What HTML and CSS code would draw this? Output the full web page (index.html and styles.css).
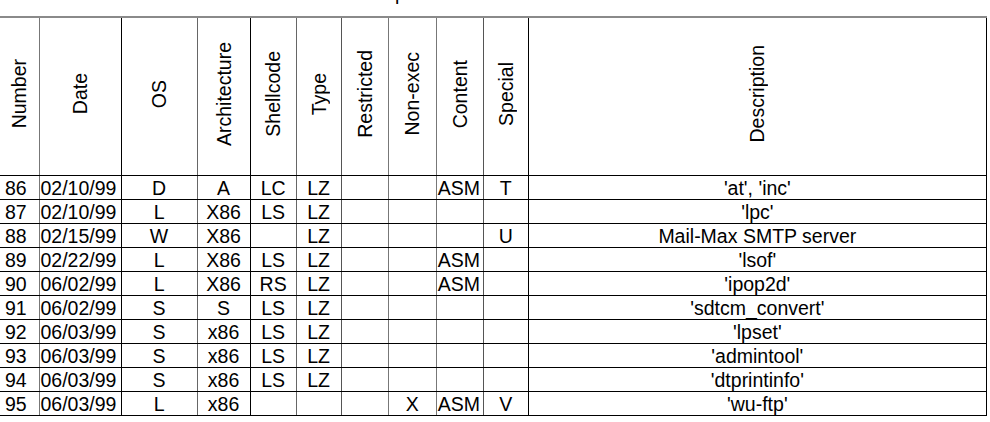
FILE: index.html
```html
<!DOCTYPE html>
<html>
<head>
<meta charset="utf-8">
<link rel="stylesheet" href="styles.css">
</head>
<body>
<div class="title"><span>p</span></div>
<table class="grid">
<colgroup>
<col class="w-num"><col class="w-date"><col class="w-os"><col class="w-arch"><col class="w-shell"><col class="w-type"><col class="w-restr"><col class="w-nonexec"><col class="w-content"><col class="w-special"><col class="w-desc">
</colgroup>
<thead>
<tr>
<th><span class="vt">Number</span></th>
<th><span class="vt">Date</span></th>
<th><span class="vt">OS</span></th>
<th><span class="vt">Architecture</span></th>
<th><span class="vt">Shellcode</span></th>
<th><span class="vt">Type</span></th>
<th><span class="vt">Restricted</span></th>
<th><span class="vt">Non-exec</span></th>
<th><span class="vt">Content</span></th>
<th><span class="vt">Special</span></th>
<th><span class="vt">Description</span></th>
</tr>
</thead>
<tbody>
<tr><td>86</td><td>02/10/99</td><td>D</td><td>A</td><td>LC</td><td>LZ</td><td></td><td></td><td>ASM</td><td>T</td><td>'at', 'inc'</td></tr>
<tr><td>87</td><td>02/10/99</td><td>L</td><td>X86</td><td>LS</td><td>LZ</td><td></td><td></td><td></td><td></td><td>'lpc'</td></tr>
<tr><td>88</td><td>02/15/99</td><td>W</td><td>X86</td><td></td><td>LZ</td><td></td><td></td><td></td><td>U</td><td>Mail-Max SMTP server</td></tr>
<tr><td>89</td><td>02/22/99</td><td>L</td><td>X86</td><td>LS</td><td>LZ</td><td></td><td></td><td>ASM</td><td></td><td>'lsof'</td></tr>
<tr><td>90</td><td>06/02/99</td><td>L</td><td>X86</td><td>RS</td><td>LZ</td><td></td><td></td><td>ASM</td><td></td><td>'ipop2d'</td></tr>
<tr><td>91</td><td>06/02/99</td><td>S</td><td>S</td><td>LS</td><td>LZ</td><td></td><td></td><td></td><td></td><td>'sdtcm_convert'</td></tr>
<tr><td>92</td><td>06/03/99</td><td>S</td><td>x86</td><td>LS</td><td>LZ</td><td></td><td></td><td></td><td></td><td>'lpset'</td></tr>
<tr><td>93</td><td>06/03/99</td><td>S</td><td>x86</td><td>LS</td><td>LZ</td><td></td><td></td><td></td><td></td><td>'admintool'</td></tr>
<tr><td>94</td><td>06/03/99</td><td>S</td><td>x86</td><td>LS</td><td>LZ</td><td></td><td></td><td></td><td></td><td>'dtprintinfo'</td></tr>
<tr><td>95</td><td>06/03/99</td><td>L</td><td>x86</td><td></td><td></td><td></td><td>X</td><td>ASM</td><td>V</td><td>'wu-ftp'</td></tr>
</tbody>
</table>
</body>
</html>
```
FILE: styles.css
```css
html, body {
  margin: 0;
  padding: 0;
  background: #fff;
}
body {
  font-family: "Liberation Sans", Arial, sans-serif;
  font-size: 19.5px;
  color: #000;
}
.title {
  height: 16px;
  overflow: hidden;
}
.title span {
  display: block;
  padding-left: 395px;
  line-height: 22px;
  margin-top: -18px;
}
.grid {
  border-collapse: collapse;
  table-layout: fixed;
  width: 987px;
}
.w-num { width: 39px; }
.w-date { width: 82px; }
.w-os { width: 76px; }
.w-arch { width: 53px; }
.w-shell { width: 46px; }
.w-type { width: 45px; }
.w-restr { width: 47px; }
.w-nonexec { width: 48px; }
.w-content { width: 47px; }
.w-special { width: 45px; }
.w-desc { width: 458px; }

.grid th,
.grid td {
  padding: 0;
  border: 1px solid #000;
  text-align: center;
  white-space: nowrap;
  overflow: hidden;
  font-weight: normal;
}
.grid td {
  height: 23px;
  line-height: 22px;
  vertical-align: middle;
}
.grid thead th {
  height: 157px;
  border-top: 2px solid #8a8a8a;
  vertical-align: middle;
}
.grid th:first-child,
.grid td:first-child {
  border-left: none;
}
.grid td:nth-child(1) {
  text-align: left;
  padding-left: 5px;
}
.grid td:nth-child(2),
.grid td:nth-child(9) {
  text-align: left;
  padding-left: 1px;
}
.grid th:nth-child(1), .grid td:nth-child(1) { border-right-color: #777; }
.grid th:nth-child(3), .grid td:nth-child(3) { border-right-color: #666; }
.grid th:nth-child(5), .grid td:nth-child(5) { border-right-color: #666; }
.grid th:nth-child(6), .grid td:nth-child(6) { border-right-color: #555; }
.grid th:nth-child(7), .grid td:nth-child(7) { border-right-color: #777; }
.grid th:nth-child(8), .grid td:nth-child(8) { border-right-color: #777; }
.grid th:nth-child(9), .grid td:nth-child(9) { border-right-color: #555; }

.vt {
  display: inline-block;
  writing-mode: vertical-rl;
  transform: rotate(180deg);
  line-height: 22px;
}
```
